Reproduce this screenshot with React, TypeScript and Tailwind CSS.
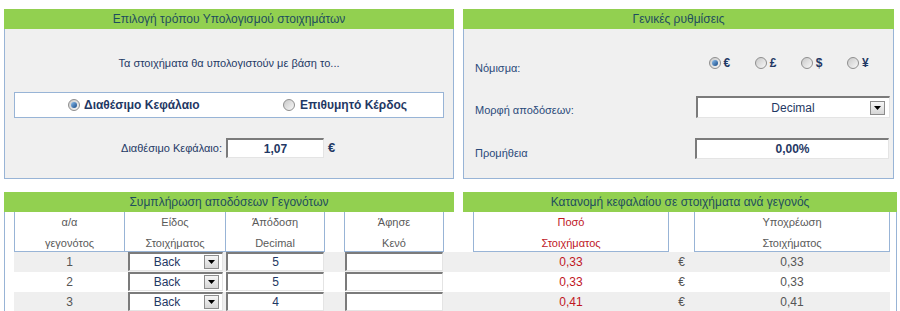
import React from "react";

// small drawn controls, the old-style web form look
function Radio({ on }: { on?: boolean }) {
  return (
    <span className="inline-flex h-[12px] w-[12px] shrink-0 items-center justify-center rounded-full border border-[#8e8e8e] bg-gradient-to-br from-[#c9c9c9] to-[#f8f8f8]">
      {on && <span className="h-[6px] w-[6px] rounded-full bg-gradient-to-br from-[#8cc0f0] to-[#164a86]" />}
    </span>
  );
}

function Arrow() {
  return (
    <span className="flex h-[14px] w-[15px] shrink-0 items-center justify-center border border-[#8c8c8c] bg-gradient-to-b from-[#f6f6f6] to-[#d6d6d6]">
      <svg width="7" height="4" viewBox="0 0 7 4">
        <path d="M0 0h7L3.5 4z" fill="#000" />
      </svg>
    </span>
  );
}

const inset =
  "border-t-2 border-l-2 border-r border-b border-t-[#7b7b7b] border-l-[#7b7b7b] border-r-[#e4e4e4] border-b-[#e4e4e4] bg-white";

const rows = [
  { n: 1, odd: "5", amt: "0,33", liab: "0,33", gray: true },
  { n: 2, odd: "5", amt: "0,33", liab: "0,33", gray: false },
  { n: 3, odd: "4", amt: "0,41", liab: "0,41", gray: true },
];

export default function App() {
  return (
    <div
      className="h-[311px] w-[900px] overflow-hidden bg-white pl-[4px] pt-[9px] text-[11px]"
      style={{ fontFamily: '"Liberation Sans", Arial, sans-serif' }}
    >
      {/* top panels */}
      <div className="flex gap-[9px]">
        {/* calculation mode */}
        <div className="w-[450px]">
          <div className="h-[20px] bg-[#92d050] text-center text-[12px] leading-[20px] text-[#1f4e5e]">
            Επιλογή τρόπου Υπολογισμού στοιχημάτων
          </div>
          <div className="flex h-[150px] flex-col border-x border-b border-[#98b4d6] bg-[#f0f0f0]">
            <div className="mt-[27px] text-center leading-[14px] text-[#1f3a66]">
              Τα στοιχήματα θα υπολογιστούν με βάση το...
            </div>
            <div className="ml-[9px] mt-[22px] flex h-[26px] w-[430px] items-center border border-[#98b4d6] bg-white text-[12px] font-bold text-[#1f3864]">
              <div className="flex w-[215px] items-center gap-[4px] pl-[53px]">
                <Radio on />
                <span>Διαθέσιμο Κεφάλαιο</span>
              </div>
              <div className="flex items-center gap-[5px] pl-[53px]">
                <Radio />
                <span>Επιθυμητό Κέρδος</span>
              </div>
            </div>
            <div className="mt-[20px] flex items-center">
              <span className="w-[217px] text-right text-[#1f3a66]">Διαθέσιμο Κεφάλαιο:</span>
              <div className={`ml-[4px] flex h-[20px] w-[98px] items-center justify-center text-[12px] font-bold text-[#1f3864] ${inset}`}>
                1,07
              </div>
              <span className="ml-[4px] text-[13px] font-bold text-[#1f3864]">€</span>
            </div>
          </div>
        </div>

        {/* general settings */}
        <div className="w-[431px]">
          <div className="h-[20px] bg-[#92d050] text-center text-[12px] leading-[20px] text-[#1f4e5e]">
            Γενικές ρυθμίσεις
          </div>
          <div className="flex h-[150px] flex-col border-x border-b border-[#98b4d6] bg-[#f0f0f0] pl-[11px] text-[#2a4a7a]">
            <div className="mt-[27px] flex h-[18px] items-start">
              <span className="w-[238px] pt-[5px] leading-[14px]">Νόμισμα:</span>
              {["€", "£", "$", "¥"].map((c, i) => (
                <div key={c} className="flex w-[47px] items-center gap-[3px] pt-[1px]">
                  <Radio on={i === 0} />
                  <span className="text-[12px] font-bold leading-[12px] text-[#1f3864]">{c}</span>
                </div>
              ))}
            </div>
            <div className="mt-[22px] flex h-[22px] items-start">
              <span className="w-[221px] pt-[7px] leading-[14px]">Μορφή αποδόσεων:</span>
              <div className={`flex h-[22px] w-[194px] items-center ${inset}`}>
                <span className="flex-1 pl-[18px] text-center text-[12px] text-[#1f3864]">Decimal</span>
                <span className="mr-[4px]">
                  <Arrow />
                </span>
              </div>
            </div>
            <div className="mt-[20px] flex h-[21px] items-start">
              <span className="w-[220px] pt-[8px] leading-[14px]">Προμήθεια</span>
              <div className={`flex h-[21px] w-[194px] items-center justify-center text-[12px] font-bold text-[#1f3864] ${inset}`}>
                0,00%
              </div>
            </div>
          </div>
        </div>
      </div>

      {/* bottom tables */}
      <div className="mt-[13px] w-[893px]">
        <div className="flex gap-[9px]">
          <div className="h-[20px] w-[450px] bg-[#92d050] text-center text-[12px] leading-[20px] text-[#1f4e5e]">
            Συμπλήρωση αποδόσεων Γεγονότων
          </div>
          <div className="h-[20px] w-[434px] bg-[#92d050] text-center text-[12px] leading-[20px] text-[#1f4e5e]">
            Κατανομή κεφαλαίου σε στοιχήματα ανά γεγονός
          </div>
        </div>
        <div className="border-x border-[#98b4d6] pl-[9px]">
          {/* column heads */}
          <div className="flex h-[40px] text-center leading-[21px] text-[#5a5a5a]">
            <div className="w-[111px] border-x border-b border-[#98b4d6]">α/α<br />γεγονότος</div>
            <div className="w-[101px] border-r border-b border-[#98b4d6]">Είδος<br />Στοιχήματος</div>
            <div className="w-[99px] border-r border-b border-[#98b4d6]">Άπόδοση<br />Decimal</div>
            <div className="w-[19px]" />
            <div className="w-[100px] border-x border-b border-[#98b4d6]">Άφησε<br />Κενό</div>
            <div className="w-[29px]" />
            <div className="w-[196px] border-x border-b border-[#98b4d6] text-[#c0171f]">Ποσό<br />Στοιχήματος</div>
            <div className="w-[25px]" />
            <div className="w-[196px] border-x border-b border-[#98b4d6]">Υποχρέωση<br />Στοιχήματος</div>
          </div>
          {/* event rows */}
          {rows.map((r) => (
            <div
              key={r.n}
              className={`flex h-[20px] w-[876px] text-[12px] leading-[20px] text-[#555] ${r.gray ? "bg-[#efefef]" : "bg-white"}`}
            >
              <div className="w-[111px] text-center">{r.n}</div>
              <div className="w-[101px] pl-[3px]">
                <div className={`flex h-[19px] w-[95px] items-center ${inset}`}>
                  <span className="flex-1 text-center leading-[15px] text-[#1f3864]">Back</span>
                  <span className="mr-[3px]">
                    <Arrow />
                  </span>
                </div>
              </div>
              <div className="w-[99px]">
                <div className={`flex h-[19px] w-[98px] items-center justify-center leading-[15px] text-[#1f3864] ${inset}`}>
                  {r.odd}
                </div>
              </div>
              <div className="w-[19px]" />
              <div className="w-[100px] pl-[1px]">
                <div className={`h-[19px] w-[98px] ${inset}`} />
              </div>
              <div className="w-[29px]" />
              <div className="w-[196px] text-center text-[#c0171f]">{r.amt}</div>
              <div className="w-[25px] text-center">€</div>
              <div className="w-[196px] text-center">{r.liab}</div>
            </div>
          ))}
        </div>
      </div>
    </div>
  );
}
